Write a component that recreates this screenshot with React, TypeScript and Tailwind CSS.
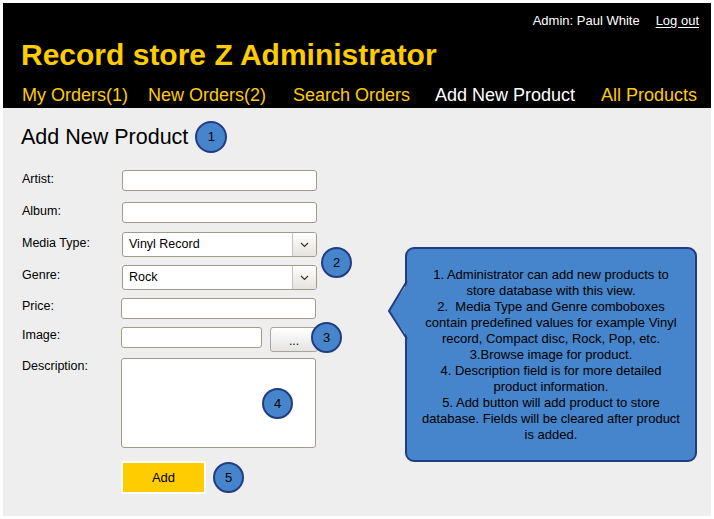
import React from 'react';

const navItems = [
  { label: 'My Orders(1)', active: false },
  { label: 'New Orders(2)', active: false },
  { label: 'Search Orders', active: false },
  { label: 'Add New Product', active: true },
  { label: 'All Products', active: false },
];

const Badge: React.FC<{ n: number; className?: string }> = ({ n, className = '' }) => (
  <div
    className={`flex h-[31px] w-[31px] shrink-0 items-center justify-center rounded-full border-2 border-[#213c82] bg-[#4684cb] text-[13px] text-black ${className}`}
  >
    {n}
  </div>
);

const Chevron = () => (
  <svg width="9" height="6" viewBox="0 0 9 6" fill="none">
    <path d="M1 1 L4.5 4.5 L8 1" stroke="#333" strokeWidth="1.2" />
  </svg>
);

const Select: React.FC<{ value: string }> = ({ value }) => (
  <div className="flex h-[25px] w-[195px] overflow-hidden rounded-[3px] border border-[#a49a8c] bg-white">
    <div className="flex flex-1 items-center pl-[6px] text-[12.5px] text-black">{value}</div>
    <div className="flex w-[24px] items-center justify-center border-l border-[#c8c2b8] bg-gradient-to-b from-white to-[#e6e3dd]">
      <Chevron />
    </div>
  </div>
);

const App: React.FC = () => {
  return (
    <div className="h-[519px] w-[714px] bg-white p-[3px] font-['Liberation_Sans',Arial,sans-serif]">
      {/* Header */}
      <div className="flex h-[105px] flex-col bg-black">
        <div className="flex items-center justify-end gap-[16px] pr-[12px] pt-[10px] text-[13px] leading-[16px] text-white">
          <span>Admin: Paul White</span>
          <a className="underline underline-offset-2">Log out</a>
        </div>
        <h1 className="mt-[9px] pl-[18px] text-[30px] font-bold leading-[34px] text-[#ffcc00]">
          Record store Z Administrator
        </h1>
        <nav className="mt-[13px] grid grid-cols-[126px_145px_142px_166px_auto] pl-[19px] text-[18px] leading-[20px]">
          {navItems.map((item) => (
            <span key={item.label} className={item.active ? 'text-white' : 'text-[#ffcc00]'}>
              {item.label}
            </span>
          ))}
        </nav>
      </div>

      {/* Content */}
      <div className="relative h-[408px] bg-[#eeeeee]">
        <div className="flex items-center gap-[7px] pl-[18px] pt-[13px]">
          <h2 className="text-[21.5px] leading-[24px] text-black">Add New Product</h2>
          <Badge n={1} className="h-[32px] w-[32px]" />
        </div>

        <div className="mt-[17px] flex flex-col pl-[19px] text-[12.5px] text-black">
          {/* Artist */}
          <div className="flex">
            <label className="w-[100px] pt-[1px] leading-[16px]">Artist:</label>
            <div className="h-[21px] w-[195px] rounded-[3px] border border-[#a49a8c] bg-white" />
          </div>
          {/* Album */}
          <div className="mt-[11px] flex">
            <label className="w-[100px] pt-[1px] leading-[16px]">Album:</label>
            <div className="h-[21px] w-[195px] rounded-[3px] border border-[#a49a8c] bg-white" />
          </div>
          {/* Media Type */}
          <div className="mt-[9px] flex">
            <label className="w-[100px] pt-[3px] leading-[16px]">Media Type:</label>
            <Select value="Vinyl Record" />
          </div>
          {/* Genre */}
          <div className="mt-[8px] flex">
            <label className="w-[100px] pt-[2px] leading-[16px]">Genre:</label>
            <Select value="Rock" />
          </div>
          {/* Price */}
          <div className="mt-[8px] flex">
            <label className="w-[99px] pt-0 leading-[16px]">Price:</label>
            <div className="h-[21px] w-[195px] rounded-[3px] border border-[#a49a8c] bg-white" />
          </div>
          {/* Image */}
          <div className="mt-[8px] flex">
            <label className="w-[99px] leading-[16px]">Image:</label>
            <div className="h-[21px] w-[141px] rounded-[3px] border border-[#a49a8c] bg-white" />
            <button className="ml-[8px] flex h-[25px] w-[48px] items-end justify-center rounded-[3px] border border-[#aaa49a] bg-gradient-to-b from-white to-[#e4e4e4] pb-[4px] text-[12px] leading-[12px]">
              ...
            </button>
          </div>
          {/* Description */}
          <div className="mt-[6px] flex">
            <label className="w-[99px] leading-[16px]">Description:</label>
            <div className="h-[90px] w-[195px] rounded-[3px] border border-[#a49a8c] bg-white" />
          </div>
          {/* Add */}
          <div className="mt-[13px] flex items-center gap-[7px] pl-[99px]">
            <button className="h-[33px] w-[85px] border-2 border-white bg-[#ffcc00] text-[13px] text-black">Add</button>
            <Badge n={5} />
          </div>
        </div>

        {/* Annotation badges */}
        <Badge n={2} className="absolute left-[318px] top-[139px]" />
        <Badge n={3} className="absolute left-[308px] top-[214px]" />
        <Badge n={4} className="absolute left-[259px] top-[280px]" />

        {/* Callout */}
        <div className="absolute left-[402px] top-[139px] flex h-[215px] w-[292px] items-center justify-center rounded-[9px] border-2 border-[#213c82] bg-[#4684cb]">
          <svg className="absolute left-[-20px] top-[31px]" width="22" height="60" viewBox="0 0 22 60">
            <polygon points="22,1 2,31 22,59" fill="#4684cb" />
            <polyline points="20,1 2,31 20,59" fill="none" stroke="#213c82" strokeWidth="2" />
          </svg>
          <p className="px-[10px] text-center text-[13px] leading-[16px] text-black">
            1. Administrator can add new products to
            <br />
            store database with this view.
            <br />
            2.&nbsp; Media Type and Genre comboboxes
            <br />
            contain predefined values for example Vinyl
            <br />
            record, Compact disc, Rock, Pop, etc.
            <br />
            3.Browse image for product.
            <br />
            4. Description field is for more detailed
            <br />
            product information.
            <br />
            5. Add button will add product to store
            <br />
            database. Fields will be cleared after product
            <br />
            is added.
          </p>
        </div>
      </div>
    </div>
  );
};

export default App;
